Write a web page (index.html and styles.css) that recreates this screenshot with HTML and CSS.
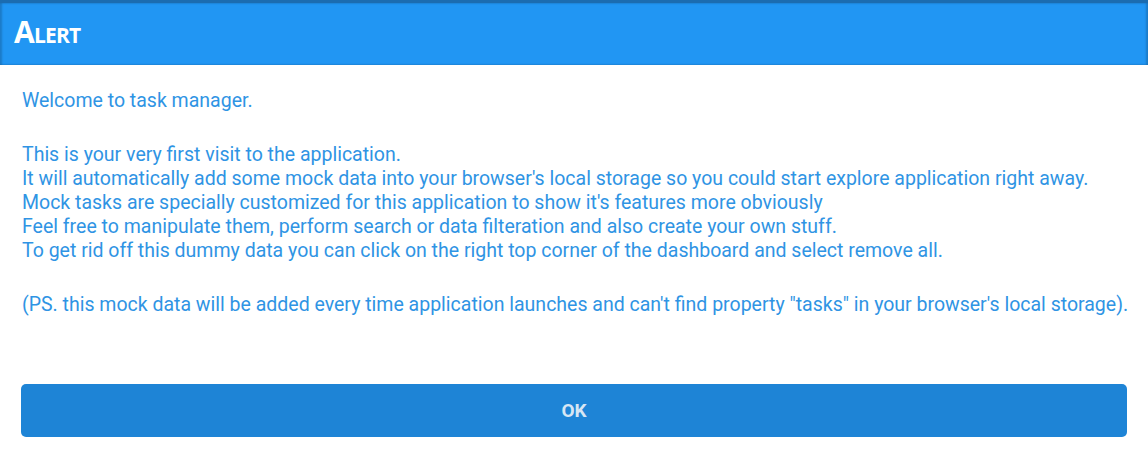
FILE: index.html
```html
<!DOCTYPE html>
<html>
<head>
<meta charset="utf-8">
<link rel="stylesheet" href="styles.css">
</head>
<body>
<div class="dialog">
  <header class="dialog-header">
    <h1 class="dialog-title">Alert</h1>
  </header>
  <div class="dialog-body">
    <p class="msg">Welcome to task manager.</p>
    <p class="msg">This is your very first visit to the application.<br>
It will automatically add some mock data into your browser's local storage so you could start explore application right away.<br>
Mock tasks are specially customized for this application to show it's features more obviously<br>
Feel free to manipulate them, perform search or data filteration and also create your own stuff.<br>
To get rid off this dummy data you can click on the right top corner of the dashboard and select remove all.</p>
    <p class="msg msg-note">(PS. this mock data will be added every time application launches and can't find property "tasks" in your browser's local storage).</p>
  </div>
  <div class="dialog-actions">
    <button class="ok-btn">OK</button>
  </div>
</div>
</body>
</html>
```
FILE: styles.css
```css
html, body {
  margin: 0;
  padding: 0;
  background: #ffffff;
}
body {
  font-family: Roboto, "Liberation Sans", sans-serif;
  width: 1148px;
  height: 458px;
  overflow: hidden;
}
.dialog {
  display: flex;
  flex-direction: column;
  height: 458px;
}
.dialog-header {
  height: 62px;
  flex-shrink: 0;
  background: #2196f3;
  border-top: 3px solid #1b6cb0;
  box-shadow: inset 2px 0 2px rgba(0,0,0,0.18), inset -2px 0 2px rgba(0,0,0,0.18);
  display: flex;
  align-items: center;
  padding-left: 14px;
}
.dialog-title {
  margin: 0;
  color: #ffffff;
  font-family: "Open Sans", Roboto, sans-serif;
  font-weight: 700;
  font-variant: small-caps;
  font-size: 30px;
  letter-spacing: -0.8px;
  line-height: 1;
  padding-bottom: 4px;
}
.dialog-body {
  padding: 24px 0 0 22px;
}
.msg {
  margin: 0 0 30px 0;
  color: #2f94e4;
  font-size: 19.5px;
  line-height: 24px;
}
.msg-note {
  white-space: nowrap;
}
.dialog-actions {
  padding: 37px 21px 0 21px;
}
.ok-btn {
  display: block;
  width: 100%;
  height: 53px;
  border: none;
  border-radius: 5px;
  background: #1e84d6;
  color: #d6e6f4;
  font-family: Roboto, "Liberation Sans", sans-serif;
  font-weight: 700;
  font-size: 19px;
  cursor: pointer;
}
```
